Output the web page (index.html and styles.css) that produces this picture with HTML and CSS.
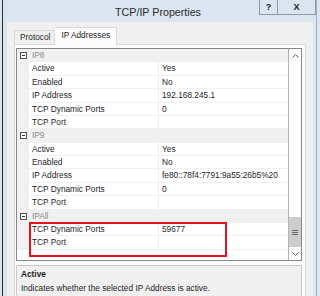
FILE: index.html
```html
<!DOCTYPE html>
<html>
<head>
    <title>TCP/IP Properties</title>
    <link rel="stylesheet" href="styles.css">
</head>
<body>
    <div class="window">
        <div class="titlebar">
            <div></div>
            <div class="title">TCP/IP Properties</div>
            <div class="caption-buttons">
                <span class="cap help">?</span>
                <span class="cap close">X</span>
            </div>
        </div>
        <div class="dialog">
            <div class="tabs">
                <div class="tab">Protocol</div>
                <div class="tab active">IP Addresses</div>
            </div>
            <div class="tab-panel">
                <div class="grid">
                    <div class="rows">
                        <div class="row cat"><span class="margin"><span class="toggle"></span></span><span class="name">IP8</span></div>
                        <div class="row"><span class="margin"></span><span class="name">Active</span><span class="value">Yes</span></div>
                        <div class="row"><span class="margin"></span><span class="name">Enabled</span><span class="value">No</span></div>
                        <div class="row"><span class="margin"></span><span class="name">IP Address</span><span class="value">192.168.245.1</span></div>
                        <div class="row"><span class="margin"></span><span class="name">TCP Dynamic Ports</span><span class="value">0</span></div>
                        <div class="row"><span class="margin"></span><span class="name">TCP Port</span><span class="value"></span></div>
                        <div class="row cat"><span class="margin"><span class="toggle"></span></span><span class="name">IP9</span></div>
                        <div class="row"><span class="margin"></span><span class="name">Active</span><span class="value">Yes</span></div>
                        <div class="row"><span class="margin"></span><span class="name">Enabled</span><span class="value">No</span></div>
                        <div class="row"><span class="margin"></span><span class="name">IP Address</span><span class="value">fe80::78f4:7791:9a55:26b5%20</span></div>
                        <div class="row"><span class="margin"></span><span class="name">TCP Dynamic Ports</span><span class="value">0</span></div>
                        <div class="row"><span class="margin"></span><span class="name">TCP Port</span><span class="value"></span></div>
                        <div class="row cat"><span class="margin"><span class="toggle"></span></span><span class="name">IPAll</span></div>
                        <div class="row"><span class="margin"></span><span class="name">TCP Dynamic Ports</span><span class="value">59677</span></div>
                        <div class="row"><span class="margin"></span><span class="name">TCP Port</span><span class="value"></span></div>
                        <div class="highlight"></div>
                    </div>
                    <div class="scrollbar">
                        <div class="sb-btn">
                            <svg width="7" height="4" viewBox="0 0 7 4"><path d="M0.5 3.5 L3.5 0.5 L6.5 3.5" fill="none" stroke="#606060" stroke-width="1"/></svg>
                        </div>
                        <div class="sb-track">
                            <div class="sb-thumb"><span class="grip"></span></div>
                        </div>
                        <div class="sb-btn">
                            <svg width="7" height="4" viewBox="0 0 7 4"><path d="M0.5 0.5 L3.5 3.5 L6.5 0.5" fill="none" stroke="#606060" stroke-width="1"/></svg>
                        </div>
                    </div>
                </div>
                <div class="desc">
                    <div class="desc-title">Active</div>
                    <div>Indicates whether the selected IP Address is active.</div>
                </div>
            </div>
        </div>
    </div>
</body>
</html>
```

FILE: styles.css
```css
body {
    margin: 0;
    background-color: #dae5f0;
    font-family: "Liberation Sans", Arial, sans-serif;
    color: #1e1e1e;
    overflow: hidden;
}

.window {
    width: 313px;
    height: 296px;
    margin-left: 2px;
    border-left: 1px solid #2b2b2b;
    border-right: 1px solid #9fb0c4;
    background-color: #dae5f0;
    display: flex;
    flex-direction: column;
}

.titlebar {
    height: 22px;
    flex: none;
    display: grid;
    grid-template-columns: 54px 1fr 57px;
    padding-right: 0;
}

.title {
    text-align: center;
    font-size: 10.7px;
    padding-top: 6px;
    color: #2a2a2a;
}

.caption-buttons {
    display: flex;
    height: 15px;
}

.cap {
    display: flex;
    align-items: center;
    justify-content: center;
    border: 1px solid #8d9aaa;
    border-top: none;
    box-sizing: border-box;
    height: 15px;
    font-weight: bold;
    font-size: 9px;
    color: #222;
}

.help {
    width: 18px;
    border-right: none;
}

.close {
    width: 39px;
}

.dialog {
    flex: 1;
    margin: 0 3px 0 4px;
    padding: 5px 7px 0 7px;
    background-color: #f0f0f0;
    display: flex;
    flex-direction: column;
    min-height: 0;
}

.tabs {
    display: flex;
    align-items: flex-end;
    height: 17px;
    position: relative;
    z-index: 1;
}

.tab {
    font-size: 8.3px;
    height: 14px;
    line-height: 13px;
    padding: 0 4px 0 5px;
    border: 1px solid #d9d9d9;
    border-bottom: none;
    box-sizing: border-box;
    background-color: #f0f0f0;
}

.tab.active {
    height: 18px;
    line-height: 14px;
    padding: 0 6px;
    background-color: #fcfcfc;
    border-left: none;
    margin-bottom: -1px;
}

.tab-panel {
    flex: 1;
    border: 1px solid #d9d9d9;
    border-bottom: none;
    background-color: #fcfcfc;
    padding: 3px 3px 0 1px;
    display: flex;
    flex-direction: column;
    min-height: 0;
}

.grid {
    height: 213px;
    flex: none;
    border: 1px solid #828790;
    box-sizing: border-box;
    display: flex;
    background-color: #fff;
}

.rows {
    flex: 1;
    position: relative;
    overflow: hidden;
}

.row {
    display: grid;
    grid-template-columns: 12px 129px 1fr;
    height: 13.38px;
    font-size: 8.3px;
    line-height: 13px;
    box-sizing: border-box;
    border-bottom: 1px solid #f0f0f0;
}

.row .margin {
    background-color: #f0f0f0;
    position: relative;
}

.row .name {
    padding-left: 3px;
    white-space: nowrap;
}

.row .value {
    padding-left: 3px;
    border-left: 1px solid #f0f0f0;
    white-space: nowrap;
}

.row.cat {
    background-color: #f0f0f0;
    grid-template-columns: 12px 1fr;
}

.row.cat .name {
    color: #8a8a8a;
}

.toggle {
    position: absolute;
    left: 3px;
    top: 3px;
    width: 7px;
    height: 7px;
    border: 1px solid #505050;
    box-sizing: border-box;
    background-color: #fff;
}

.toggle::after {
    content: "";
    position: absolute;
    left: 1px;
    right: 1px;
    top: 2px;
    height: 1px;
    background-color: #303030;
}

.highlight {
    position: absolute;
    left: 12px;
    top: 173px;
    width: 198px;
    height: 35px;
    border: 2px solid #e0141e;
    box-sizing: border-box;
}

.scrollbar {
    width: 13px;
    flex: none;
    border-left: 1px solid #b4b4b4;
    box-sizing: border-box;
    display: flex;
    flex-direction: column;
    background-color: #fdfdfd;
}

.sb-btn {
    height: 13px;
    display: flex;
    align-items: center;
    justify-content: center;
}

.sb-track {
    flex: 1;
    display: flex;
    flex-direction: column;
    justify-content: flex-end;
}

.sb-thumb {
    height: 30px;
    background-color: #cdcdcd;
    display: flex;
    align-items: center;
    justify-content: center;
}

.grip {
    width: 6px;
    height: 5px;
    border-top: 1px solid #6a6a6a;
    border-bottom: 1px solid #6a6a6a;
    box-sizing: border-box;
    position: relative;
}

.grip::after {
    content: "";
    position: absolute;
    left: 0;
    right: 0;
    top: 1px;
    height: 1px;
    background-color: #6a6a6a;
}

.desc {
    margin-top: 4px;
    flex: 1;
    border: 1px solid #c9c9c9;
    border-bottom: none;
    background-color: #f0f0f0;
    padding: 1px 4px 0 4px;
    font-size: 8.3px;
    line-height: 14px;
}

.desc-title {
    font-weight: bold;
}
```
